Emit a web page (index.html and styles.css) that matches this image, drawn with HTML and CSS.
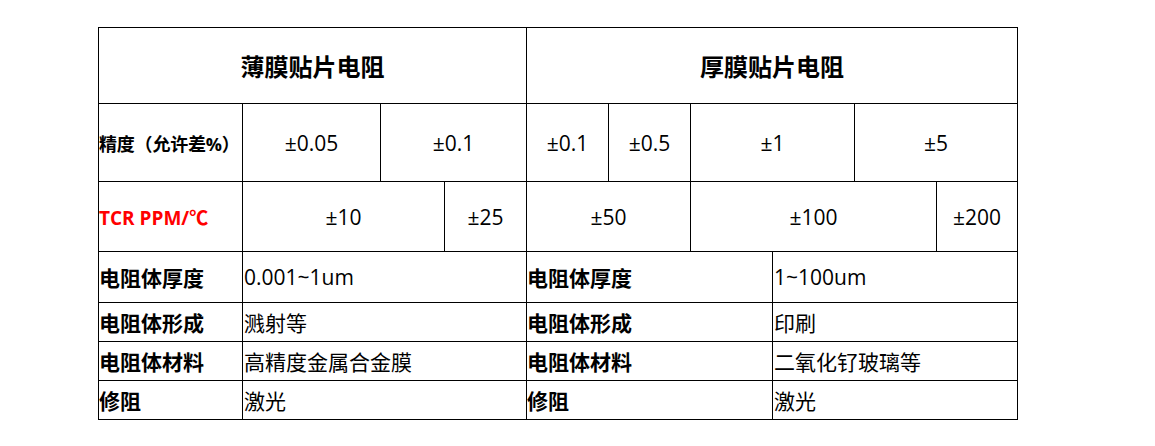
FILE: index.html
```html
<!DOCTYPE html>
<html lang="zh-CN">
<head>
<meta charset="utf-8">
<title>薄膜与厚膜贴片电阻</title>
<link rel="stylesheet" href="styles.css">
</head>
<body>
<div class="table">
  <div class="cell head s4">薄膜贴片电阻</div>
  <div class="cell head s6">厚膜贴片电阻</div>

  <div class="cell label small">精度（允许差%）</div>
  <div class="cell val">±0.05</div>
  <div class="cell val s2">±0.1</div>
  <div class="cell val">±0.1</div>
  <div class="cell val">±0.5</div>
  <div class="cell val s2">±1</div>
  <div class="cell val s2">±5</div>

  <div class="cell label red">TCR PPM/℃</div>
  <div class="cell val s2">±10</div>
  <div class="cell val">±25</div>
  <div class="cell val s2">±50</div>
  <div class="cell val s3">±100</div>
  <div class="cell val">±200</div>

  <div class="cell label">电阻体厚度</div>
  <div class="cell text s3">0.001~1um</div>
  <div class="cell label s3">电阻体厚度</div>
  <div class="cell text s3">1~100um</div>

  <div class="cell label">电阻体形成</div>
  <div class="cell text s3">溅射等</div>
  <div class="cell label s3">电阻体形成</div>
  <div class="cell text s3">印刷</div>

  <div class="cell label">电阻体材料</div>
  <div class="cell text s3">高精度金属合金膜</div>
  <div class="cell label s3">电阻体材料</div>
  <div class="cell text s3">二氧化钌玻璃等</div>

  <div class="cell label">修阻</div>
  <div class="cell text s3">激光</div>
  <div class="cell label s3">修阻</div>
  <div class="cell text s3">激光</div>
</div>
</body>
</html>
```
FILE: styles.css
```css
* { box-sizing: border-box; }
html, body { margin: 0; padding: 0; background: #fff; }
body {
  font-family: "Open Sans", "Noto Sans CJK SC", sans-serif;
  color: #000;
}
.table {
  display: grid;
  grid-template-columns: 144px 138px 64px 82px 82px 82px 82px 82px 82px 81px;
  grid-template-rows: 76px 78px 70px 51px 39px 39px 39px;
  width: 920px;
  margin: 27px 0 0 98px;
  border-left: 1px solid #000;
  border-top: 1px solid #000;
}
.cell {
  border-right: 1px solid #000;
  border-bottom: 1px solid #000;
  display: flex;
  align-items: center;
  padding: 0;
  font-size: 21px;
  white-space: nowrap;
}
.s2 { grid-column: span 2; }
.s3 { grid-column: span 3; }
.s4 { grid-column: span 4; }
.s6 { grid-column: span 6; }
.head {
  justify-content: center;
  font-weight: 700;
  font-size: 24px;
}
.val { justify-content: center; font-size: 21px; }
.label { font-weight: 700; font-size: 21px; }
.text { font-size: 21px; padding-left: 1px; }
.small { font-size: 18px; letter-spacing: -0.2px; }
.red { color: #ff0000; font-size: 19px; }
```
